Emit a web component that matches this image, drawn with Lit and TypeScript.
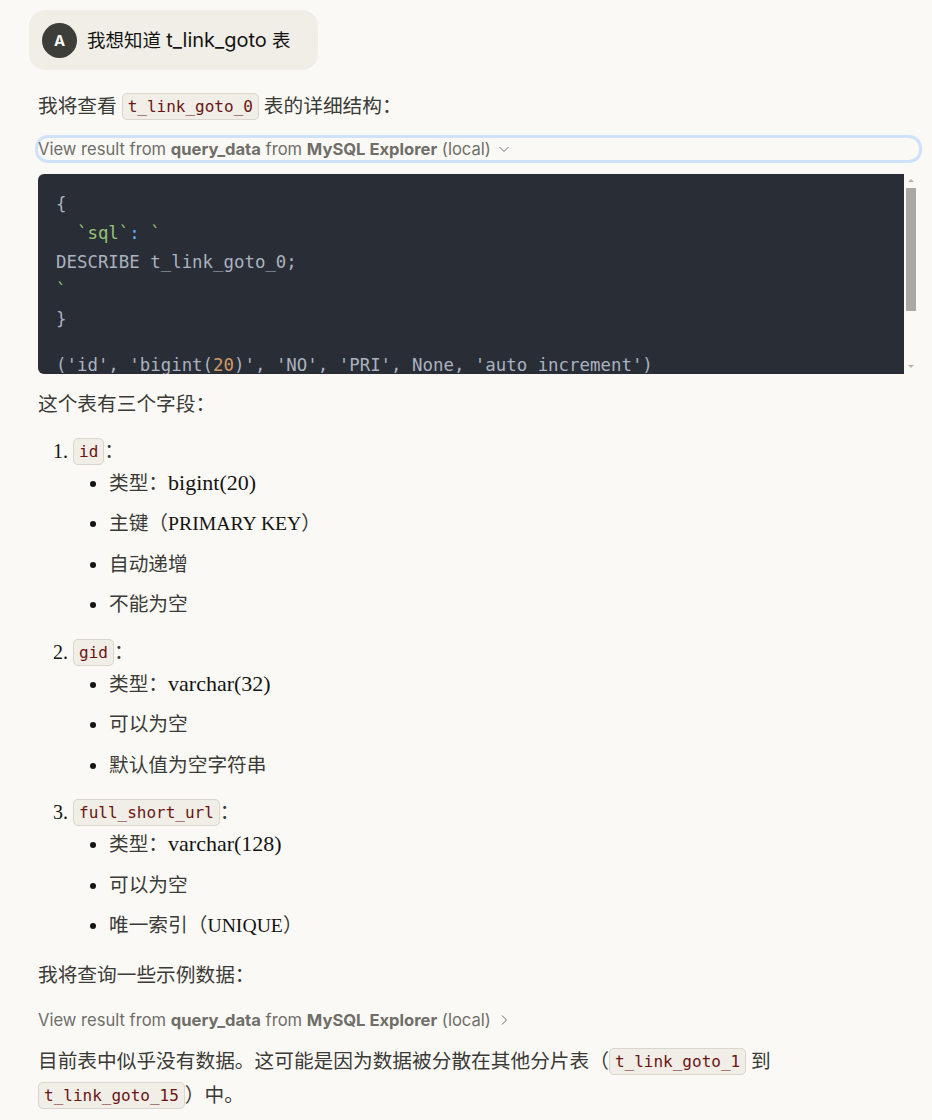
import { LitElement, css, html } from "lit";
import { customElement } from "lit/decorators.js";

type Field = {
  name: string;
  details: unknown[];
};

const lat = (text: string) => html`<span class="lat">${text}</span>`;
const caps = (text: string) => html`<span class="caps">${text}</span>`;

const FIELDS: Field[] = [
  {
    name: "id",
    details: [
      html`类型：${lat("bigint(20)")}`,
      html`主键（${caps("PRIMARY KEY")}）`,
      "自动递增",
      "不能为空",
    ],
  },
  {
    name: "gid",
    details: [html`类型：${lat("varchar(32)")}`, "可以为空", "默认值为空字符串"],
  },
  {
    name: "full_short_url",
    details: [
      html`类型：${lat("varchar(128)")}`,
      "可以为空",
      html`唯一索引（${caps("UNIQUE")}）`,
    ],
  },
];

@customElement("app-root")
export class AppRoot extends LitElement {
  private _toolRow(open: boolean) {
    return html`
      <div class="tool ${open ? "open" : ""}">
        <span>View result from <b>query_data</b> from <b>MySQL Explorer</b> (local)</span>
        ${open
          ? html`<svg class="chev" viewBox="0 0 12 12" width="12" height="12">
              <path d="M1.5 4 L6 8.5 L10.5 4" />
            </svg>`
          : html`<svg class="chev" viewBox="0 0 12 12" width="12" height="12">
              <path d="M4 1.5 L8.5 6 L4 10.5" />
            </svg>`}
      </div>
    `;
  }

  protected render() {
    return html`
      <div class="user">
        <span class="avatar">A</span>
        <span class="user-text">我想知道 <span class="user-latin">t_link_goto</span> 表</span>
      </div>

      <p class="intro">我将查看 <code>t_link_goto_0</code> 表的详细结构：</p>

      ${this._toolRow(true)}

      <div class="result">
        <div class="code">
          <div class="code-line">{</div>
          <div class="code-line">  <span class="green">\`sql\`</span><span class="blue">:</span> <span class="green">\`</span></div>
          <div class="code-line">DESCRIBE t_link_goto_0;</div>
          <div class="code-line"><span class="green">\`</span></div>
          <div class="code-line">}</div>
          <div class="code-line row">('id', 'bigint(<span class="orange">20</span>)', 'NO', 'PRI', None, 'auto_increment')</div>
        </div>
        <div class="rail">
          <span class="arrow up"></span>
          <span class="thumb"></span>
          <span class="arrow down"></span>
        </div>
      </div>

      <p class="fields-intro">这个表有三个字段：</p>

      <ol>
        ${FIELDS.map(
          (field) => html`
            <li>
              <code>${field.name}</code>：
              <ul>
                ${field.details.map((detail) => html`<li>${detail}</li>`)}
              </ul>
            </li>
          `
        )}
      </ol>

      <p class="sample">我将查询一些示例数据：</p>

      ${this._toolRow(false)}

      <p class="outro">
        目前表中似乎没有数据。这可能是因为数据被分散在其他分片表（<code>t_link_goto_1</code> 到
        <code>t_link_goto_15</code>）中。
      </p>
    `;
  }

  static styles = css`
    :host {
      display: block;
      box-sizing: border-box;
      min-height: 1120px;
      padding: 10px 28px 0 38px;
      background: #faf9f5;
      color: #3a3a37;
      font-family: "Liberation Serif", "Noto Sans CJK SC", serif;
      font-size: 19.7px;
      line-height: 34px;
    }

    p {
      margin: 0;
    }

    .user {
      display: flex;
      align-items: center;
      gap: 10px;
      box-sizing: border-box;
      width: 289px;
      height: 60px;
      margin-left: -9px;
      padding: 0 13px;
      border-radius: 16px;
      background: #f0eee6;
    }

    .avatar {
      display: flex;
      align-items: center;
      justify-content: center;
      flex: none;
      width: 35px;
      height: 35px;
      border-radius: 50%;
      background: #3d3d3a;
      color: #faf9f5;
      font: 700 15px "Inter", sans-serif;
    }

    .user-text {
      color: #141413;
      font-family: "Inter", "Noto Sans CJK SC", sans-serif;
      font-size: 18.5px;
      white-space: nowrap;
    }

    .user-latin {
      font-size: 20px;
    }

    .intro {
      margin-top: 19px;
    }

    .tool {
      display: flex;
      align-items: center;
      gap: 7px;
      height: 22px;
      margin-top: 15px;
      color: #6f6e69;
      font-family: "Inter", sans-serif;
      font-size: 16.58px;
      line-height: 22px;
      white-space: nowrap;
    }

    .tool b {
      font-weight: 700;
    }

    .tool.open {
      border-radius: 10px;
      box-shadow: 0 0 0 3px #cfe2fa;
      width: 881px;
    }

    .chev {
      fill: none;
      stroke: #6f6e69;
      stroke-width: 1;
    }

    .result {
      display: flex;
      height: 200px;
      margin-top: 14px;
    }

    .code {
      flex: none;
      box-sizing: border-box;
      width: 866px;
      padding: 16px 18px 0;
      overflow: hidden;
      border-radius: 6px 0 0 6px;
      background: #292d36;
      color: #abb2bf;
      font-family: "DejaVu Sans Mono", monospace;
      font-size: 17.4px;
      line-height: 28.8px;
    }

    .code-line {
      white-space: pre;
    }

    .code-line.row {
      margin-top: 16.6px;
    }

    .green {
      color: #98c379;
    }

    .blue {
      color: #61afef;
    }

    .orange {
      color: #d19a66;
    }

    .rail {
      display: flex;
      flex: none;
      flex-direction: column;
      align-items: center;
      width: 10px;
      margin-left: 2px;
    }

    .arrow {
      width: 0;
      height: 0;
      border-left: 3px solid transparent;
      border-right: 3px solid transparent;
    }

    .arrow.up {
      margin: 5px 0 6px;
      border-bottom: 3px solid #b5b4ae;
    }

    .arrow.down {
      margin-top: auto;
      margin-bottom: 6px;
      border-top: 3px solid #b5b4ae;
    }

    .thumb {
      width: 10px;
      height: 123px;
      background: #a9a8a2;
    }

    .fields-intro {
      margin-top: 13px;
    }

    code {
      padding: 3px 5px;
      border: 1px solid #d8d6ce;
      border-radius: 5px;
      background: #f0eee6;
      color: #6b1414;
      font-family: "DejaVu Sans Mono", monospace;
      font-size: 16px;
      line-height: 20px;
      white-space: nowrap;
      vertical-align: 1px;
    }

    ol {
      display: flex;
      flex-direction: column;
      gap: 13.6px;
      margin: 13px 0 0;
      padding-left: 35px;
    }

    ol > li::marker {
      color: #141413;
      font-size: 20px;
    }

    ul {
      display: flex;
      flex-direction: column;
      gap: 6.4px;
      margin: -2px 0 0;
      padding-left: 36px;
      list-style: disc;
    }

    ul > li::marker {
      color: #141413;
    }

    .lat {
      color: #141413;
      font-size: 22px;
      line-height: 20px;
    }

    .caps {
      color: #141413;
    }

    .sample {
      margin-top: 16px;
    }

    .tool:not(.open) {
      margin-top: 17px;
    }

    .outro {
      margin-top: 13px;
    }
  `;
}

declare global {
  interface HTMLElementTagNameMap {
    "app-root": AppRoot;
  }
}
